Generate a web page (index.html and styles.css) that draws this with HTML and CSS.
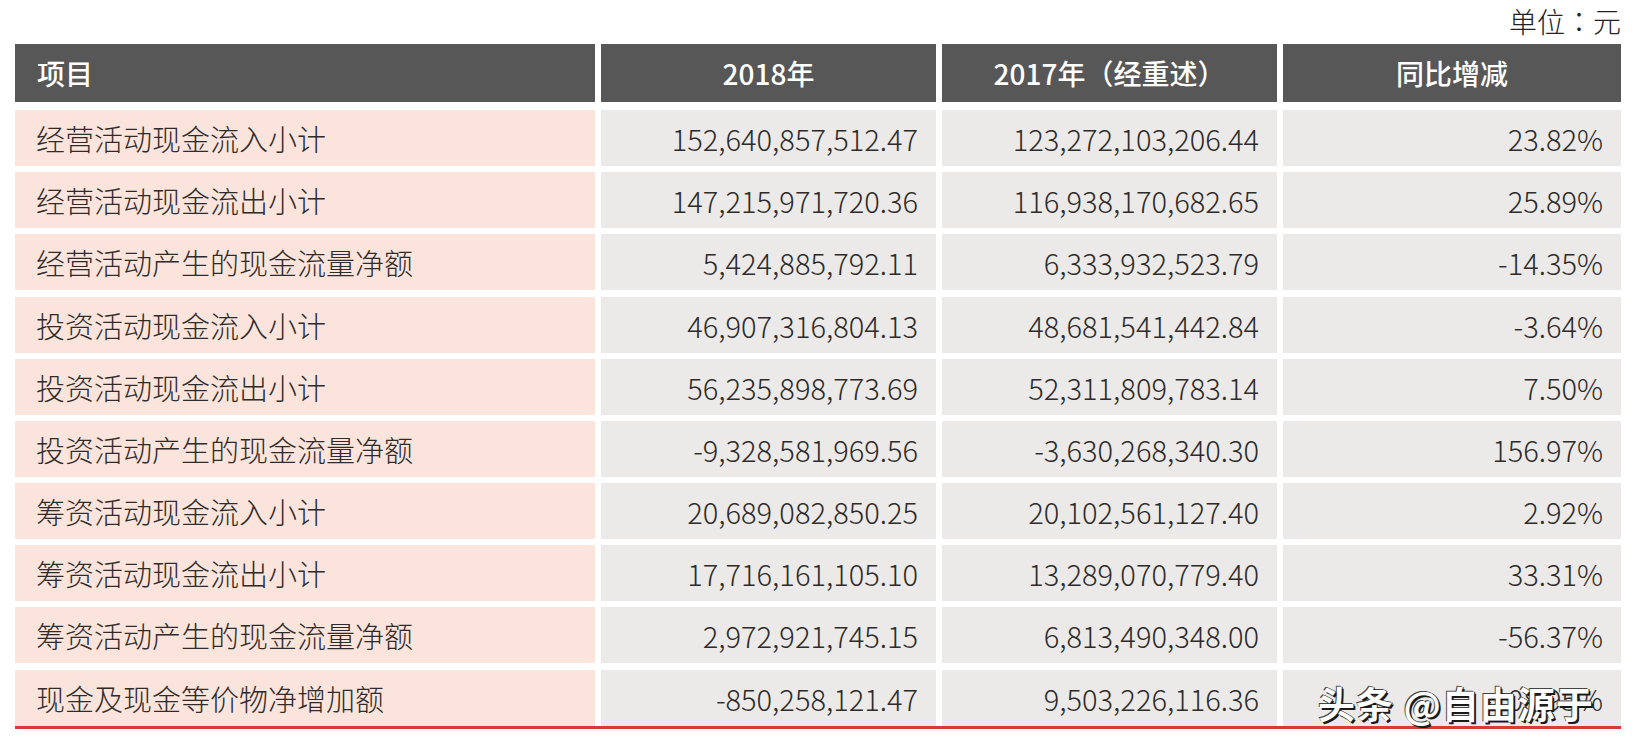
FILE: index.html
```html
<!DOCTYPE html>
<html lang="zh-CN">
<head>
<meta charset="utf-8">
<title>现金流量表</title>
<link rel="stylesheet" href="styles.css">
</head>
<body>
<div class="page">
  <div class="unit" lang="zh-Hant">单位：元</div>
  <div class="table">
    <div class="row head">
      <div class="cell label">项目</div>
      <div class="cell">2018年</div>
      <div class="cell">2017年（经重述）</div>
      <div class="cell">同比增减</div>
    </div>
    <div class="row"><div class="cell label">经营活动现金流入小计</div><div class="cell num">152,640,857,512.47</div><div class="cell num">123,272,103,206.44</div><div class="cell num">23.82%</div></div>
    <div class="row"><div class="cell label">经营活动现金流出小计</div><div class="cell num">147,215,971,720.36</div><div class="cell num">116,938,170,682.65</div><div class="cell num">25.89%</div></div>
    <div class="row"><div class="cell label">经营活动产生的现金流量净额</div><div class="cell num">5,424,885,792.11</div><div class="cell num">6,333,932,523.79</div><div class="cell num">-14.35%</div></div>
    <div class="row"><div class="cell label">投资活动现金流入小计</div><div class="cell num">46,907,316,804.13</div><div class="cell num">48,681,541,442.84</div><div class="cell num">-3.64%</div></div>
    <div class="row"><div class="cell label">投资活动现金流出小计</div><div class="cell num">56,235,898,773.69</div><div class="cell num">52,311,809,783.14</div><div class="cell num">7.50%</div></div>
    <div class="row"><div class="cell label">投资活动产生的现金流量净额</div><div class="cell num">-9,328,581,969.56</div><div class="cell num">-3,630,268,340.30</div><div class="cell num">156.97%</div></div>
    <div class="row"><div class="cell label">筹资活动现金流入小计</div><div class="cell num">20,689,082,850.25</div><div class="cell num">20,102,561,127.40</div><div class="cell num">2.92%</div></div>
    <div class="row"><div class="cell label">筹资活动现金流出小计</div><div class="cell num">17,716,161,105.10</div><div class="cell num">13,289,070,779.40</div><div class="cell num">33.31%</div></div>
    <div class="row"><div class="cell label">筹资活动产生的现金流量净额</div><div class="cell num">2,972,921,745.15</div><div class="cell num">6,813,490,348.00</div><div class="cell num">-56.37%</div></div>
    <div class="row last"><div class="cell label">现金及现金等价物净增加额</div><div class="cell num">-850,258,121.47</div><div class="cell num">9,503,226,116.36</div><div class="cell num">-108.95%</div></div>
  </div>
  <div class="watermark">头条 @自由源于</div>
</div>
</body>
</html>
```

FILE: styles.css
```css
html, body {
  margin: 0;
  padding: 0;
  background: #ffffff;
}

body {
  font-family: "Noto Sans CJK SC", "Noto Sans", sans-serif;
  color: #2e2b2a;
}

.page {
  position: relative;
  width: 1642px;
  height: 753px;
  overflow: hidden;
}

.unit {
  height: 44px;
  line-height: 42px;
  text-align: right;
  padding-right: 21px;
  font-family: "Noto Sans CJK TC", "Noto Sans CJK SC", sans-serif;
  font-size: 28px;
  font-weight: 300;
  color: #222;
}

.table {
  margin-left: 15px;
  width: 1606px;
  display: flex;
  flex-direction: column;
  gap: 6.2px;
  border-bottom: 3px solid #d8393b;
}

.row {
  display: grid;
  grid-template-columns: 580px 335px 335px 1fr;
  column-gap: 6px;
  height: 56px;
}

.row.head {
  height: 58px;
  margin-bottom: 1.8px;
}

.cell {
  display: flex;
  align-items: center;
  justify-content: flex-end;
  padding: 0 18px 0 20px;
  background: #ebeae8;
  font-size: 29px;
  font-weight: 300;
  white-space: nowrap;
}

.cell.label {
  justify-content: flex-start;
  padding-left: 21px;
  background: #fbe4dc;
}

.head .cell {
  background: #575757;
  color: #ffffff;
  font-weight: 500;
  font-size: 28px;
  justify-content: center;
  padding: 0;
}

.head .cell.label {
  justify-content: flex-start;
  padding-left: 22px;
}

.watermark {
  position: absolute;
  left: 1318px;
  top: 676px;
  font-size: 37px;
  font-weight: 700;
  color: #ffffff;
  letter-spacing: 1px;
  text-shadow: 2px 2px 0 #1a1a1a, -1px -1px 0 #444, 1px 0 0 #222;
  white-space: nowrap;
}
```
